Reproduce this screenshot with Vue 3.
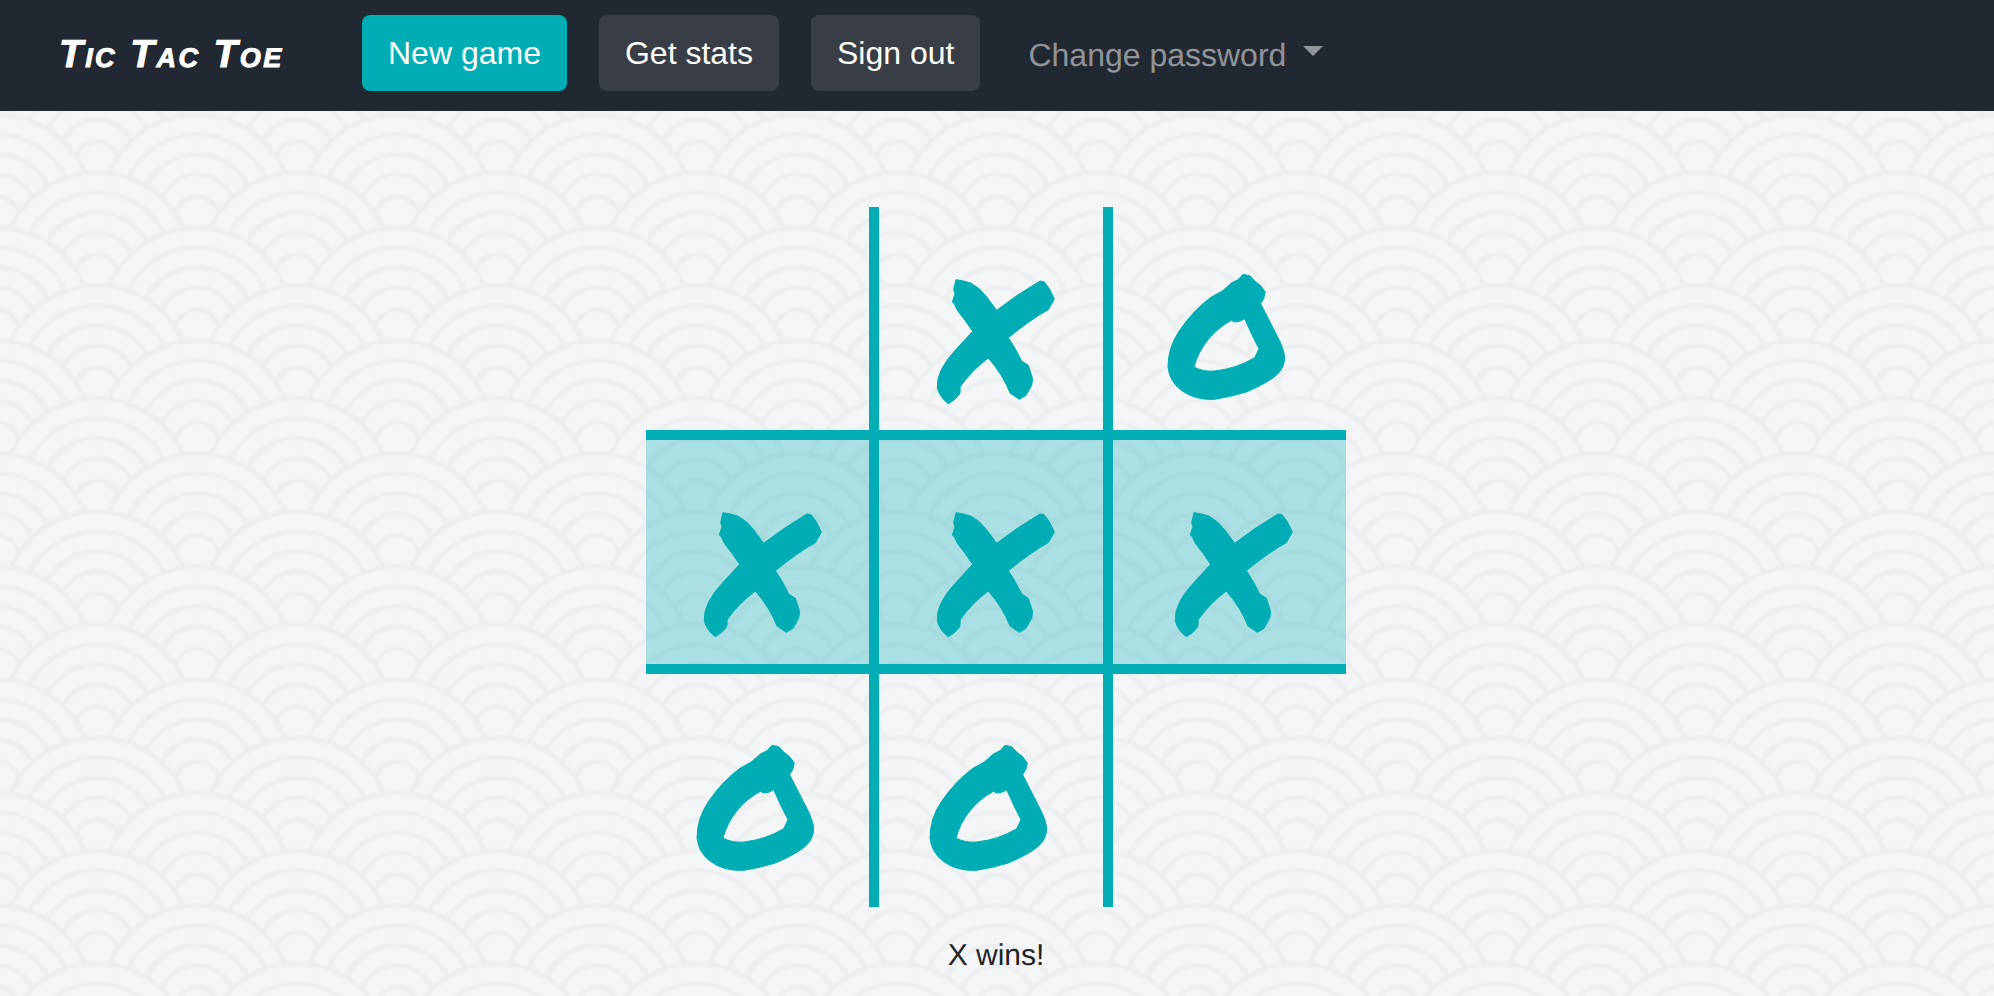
<script setup>
const X_PATH = 'M168 88L190 92 212 98Q240 112 262 142L290 180Q350 133 420 92L432 94 448 115 463 146 445 178Q395 205 325 262Q345 290 365 332L385 345 398 385 395 405 378 435 358 447 330 428Q310 375 265 323Q215 360 180 410Q182 425 178 432Q165 450 145 460Q118 440 112 412Q108 360 170 295L218 243 195 210 172 180 163 160 157 155 165 130 161 118Z'
const O_PATH = 'M310 72L330 76 345 92 362 105 377 125 372 145 363 160 415 262Q432 295 435 320Q435 350 415 370Q390 395 320 425Q270 440 225 447Q165 450 125 420Q90 395 85 350Q85 290 120 240Q160 180 215 140L248 122 275 98 295 88ZM315 205L300 213 285 215 275 210Q235 232 205 268Q175 305 163 350Q190 365 225 362Q290 355 345 322L358 295 340 260Z'

const cells = [
  { mark: '', win: false }, { mark: 'x', win: false }, { mark: 'o', win: false },
  { mark: 'x', win: true }, { mark: 'x', win: true }, { mark: 'x', win: true },
  { mark: 'o', win: false }, { mark: 'o', win: false }, { mark: '', win: false },
]
</script>

<template>
  <div class="page">
    <nav class="navbar">
      <a class="brand">Tic Tac Toe</a>
      <div class="actions">
        <button class="btn btn-primary">New game</button>
        <button class="btn">Get stats</button>
        <button class="btn">Sign out</button>
      </div>
      <a class="dropdown">Change password<span class="caret"></span></a>
    </nav>
    <main class="main">
      <div class="board">
        <div v-for="(cell, i) in cells" :key="i" class="cell" :class="{ win: cell.win }">
          <svg v-if="cell.mark === 'x'" class="mark" viewBox="3 -64 540 540" width="180" height="180">
            <path :d="X_PATH" />
          </svg>
          <svg v-else-if="cell.mark === 'o'" class="mark" viewBox="-2 -64 540 540" width="180" height="180">
            <path :d="O_PATH" fill-rule="evenodd" />
          </svg>
        </div>
      </div>
      <p class="status">X wins!</p>
    </main>
  </div>
</template>

<style>
html, body { margin: 0; overflow: hidden; background: #f4f5f7; }
</style>

<style scoped>
.page {
  display: flex;
  flex-direction: column;
  height: 996px;
  font-family: "Liberation Sans", Arial, sans-serif;
  text-rendering: geometricPrecision;
}
.navbar {
  display: flex;
  align-items: flex-start;
  height: 111px;
  padding: 15px 0 0 59px;
  box-sizing: border-box;
  background: #222831;
  flex: none;
}
.brand {
  width: 303px;
  margin-top: 20px;
  font-family: "Liberation Sans", sans-serif;
  font-size: 39px;
  line-height: 40px;
  font-weight: 700;
  font-style: italic;
  font-variant: small-caps;
  letter-spacing: 2.4px;
  -webkit-text-stroke: 1px #fff;
  color: #fff;
  flex: none;
}
.actions { display: flex; gap: 32px; }
.btn {
  height: 76px;
  padding: 0 26px;
  border: 0;
  border-radius: 8px;
  background: #393e46;
  color: #fff;
  font: 32px/48px "Liberation Sans", Arial, sans-serif;
}
.btn-primary { background: #00adb5; }
.dropdown {
  display: flex;
  align-items: center;
  height: 76px;
  margin-left: 48px;
  padding-top: 4px;
  box-sizing: border-box;
  color: rgba(255, 255, 255, 0.5);
  font-size: 32px;
  line-height: 48px;
}
.caret {
  width: 0;
  height: 0;
  margin: -8px 0 0 16.5px;
  border-top: 10px solid rgba(255, 255, 255, 0.5);
  border-left: 10px solid transparent;
  border-right: 10px solid transparent;
}
.main {
  flex: 1;
  display: flex;
  flex-direction: column;
  align-items: center;
  padding: 96px 2px 0 0;
  background-color: #f4f5f7;
  background-image: url("data:image/svg+xml,<svg xmlns='http://www.w3.org/2000/svg' width='200' height='113'><defs><filter id='b' x='-5%25' y='-5%25' width='110%25' height='110%25'><feGaussianBlur stdDeviation='0.9'/></filter><g id='s'><circle r='95' fill='%23f4f5f7'/><g fill='none' stroke='%23eceef0' stroke-width='4.5' filter='url(%23b)'><circle r='95'/><path d='M-76 1A76 76 0 0 1 76 1M-57 2A57 57 0 0 1 57 2M-38 3A38 38 0 0 1 38 3M-22 9A22 22 0 0 1 22 9'/></g></g></defs><use href='%23s' x='97' y='-69.5'/><use href='%23s' x='-103' y='-69.5'/><use href='%23s' x='297' y='-69.5'/><use href='%23s' x='-3' y='-14.5'/><use href='%23s' x='197' y='-14.5'/><use href='%23s' x='97' y='43.5'/><use href='%23s' x='-103' y='43.5'/><use href='%23s' x='297' y='43.5'/><use href='%23s' x='-3' y='98.5'/><use href='%23s' x='197' y='98.5'/><use href='%23s' x='97' y='156.5'/><use href='%23s' x='-103' y='156.5'/><use href='%23s' x='297' y='156.5'/></svg>");
  background-size: 200px 113px;
}
.board {
  display: grid;
  grid-template-columns: repeat(3, 1fr);
  grid-template-rows: repeat(3, 1fr);
  width: 700px;
  height: 700px;
  flex: none;
}
.cell {
  display: flex;
  align-items: center;
  justify-content: center;
  border-right: 10px solid #00adb5;
  border-bottom: 10px solid #00adb5;
  overflow: hidden;
  min-width: 0;
  min-height: 0;
}
.cell:nth-child(3n) { border-right: 0; }
.cell:nth-child(n + 7) { border-bottom: 0; }
.cell.win { background: rgba(0, 173, 181, 0.3); }
.mark {
  display: block;
  flex: none;
  fill: #00adb5;
  stroke: #00adb5;
  stroke-width: 3;
  stroke-linejoin: round;
}
.status {
  margin: 27px 0 0;
  font-size: 30px;
  line-height: 44px;
  color: #212529;
}
</style>
